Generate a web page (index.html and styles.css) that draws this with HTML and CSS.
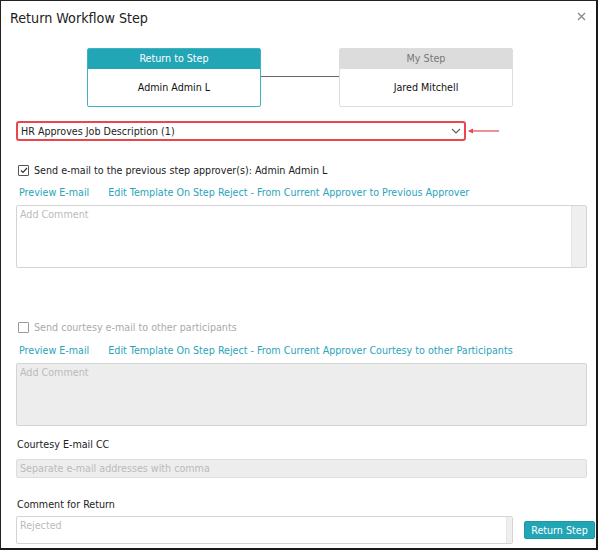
FILE: index.html
```html
<!DOCTYPE html>
<html lang="en">
  <head>
    <meta charset="UTF-8" />
    <meta name="viewport" content="width=device-width, initial-scale=1.0" />
    <title>Return Workflow Step</title>
    <link rel="stylesheet" href="styles.css">
  </head>
  <body>
    <div class="modal">
      <div class="modal-header">
        <h1>Return Workflow Step</h1>
        <svg class="close" width="9" height="9" viewBox="0 0 9 9">
          <path d="M1 1 L8 8 M8 1 L1 8" stroke="#888" stroke-width="1.3" />
        </svg>
      </div>

      <div class="steps">
        <div class="step active">
          <div class="step-title">Return to Step</div>
          <div class="step-name">Admin Admin L</div>
        </div>
        <div class="step-line"></div>
        <div class="step">
          <div class="step-title">My Step</div>
          <div class="step-name">Jared Mitchell</div>
        </div>
      </div>

      <div class="form">
        <div class="select-row">
          <div class="select">
            <span>HR Approves Job Description (1)</span>
            <svg width="10" height="6" viewBox="0 0 10 6">
              <path d="M1 1 L5 5 L9 1" fill="none" stroke="#666" stroke-width="1.2" />
            </svg>
          </div>
          <svg class="pointer" width="34" height="8" viewBox="0 0 34 8">
            <path d="M2 4 H32" stroke="#e8474c" stroke-width="1.2" />
            <path d="M1 4 L6 1.5 L6 6.5 Z" fill="#e8474c" />
          </svg>
        </div>

        <label class="check">
          <span class="box checked">
            <svg width="8" height="7" viewBox="0 0 8 7">
              <path d="M1 3.5 L3 5.5 L7 1" fill="none" stroke="#333" stroke-width="1.2" />
            </svg>
          </span>
          Send e-mail to the previous step approver(s): Admin Admin L
        </label>

        <div class="links">
          <a href="#">Preview E-mail</a>
          <a href="#">Edit Template On Step Reject - From Current Approver to Previous Approver</a>
        </div>

        <div class="field tall">
          <textarea placeholder="Add Comment"></textarea>
          <span class="scroll"></span>
        </div>

        <label class="check disabled">
          <span class="box"></span>
          Send courtesy e-mail to other participants
        </label>

        <div class="links">
          <a href="#">Preview E-mail</a>
          <a href="#">Edit Template On Step Reject - From Current Approver Courtesy to other Participants</a>
        </div>

        <div class="field tall disabled">
          <textarea placeholder="Add Comment" disabled></textarea>
        </div>

        <div class="label">Courtesy E-mail CC</div>
        <input class="cc" type="text" placeholder="Separate e-mail addresses with comma" disabled />

        <div class="label">Comment for Return</div>
        <div class="return-row">
          <div class="field short">
            <textarea placeholder="Rejected"></textarea>
            <span class="scroll"></span>
          </div>
          <button type="button">Return Step</button>
        </div>
      </div>
    </div>
  </body>
</html>
```

FILE: styles.css
```css
body {
  margin: 0;
  background: #fff;
  font-family: "DejaVu Sans Condensed", "DejaVu Sans", sans-serif;
  font-size: 10.65px;
  color: #222;
}

.modal {
  width: 598px;
  height: 550px;
  box-sizing: border-box;
  border: 1px solid #222;
  border-right: 2px solid #1a1a1a;
  border-bottom: 2px solid #1a1a1a;
  background: #fff;
}

.modal-header {
  display: flex;
  justify-content: space-between;
  align-items: flex-start;
  padding: 9px 10px 0 9px;
  height: 38px;
}

.modal-header h1 {
  margin: 0;
  font-size: 14.2px;
  font-weight: normal;
  color: #222;
}

.close {
  margin-top: 2px;
}

.steps {
  display: flex;
  justify-content: center;
  align-items: center;
  padding-left: 3px;
}

.step {
  width: 174px;
  height: 59px;
  box-sizing: border-box;
  border: 1px solid #ddd;
  border-radius: 2px;
  text-align: center;
}

.step-title {
  height: 20px;
  line-height: 20px;
  background: #dcdcdc;
  color: #777;
}

.step-name {
  line-height: 38px;
  color: #111;
}

.step.active {
  border-color: #3fb3c2;
}

.step.active .step-title {
  background: #22a6b6;
  color: #fff;
}

.step-line {
  width: 78px;
  border-top: 1px solid #666;
  margin-top: -3px;
}

.form {
  padding: 14px 1px 0 15px;
}

.select-row {
  display: flex;
  align-items: center;
}

.select {
  width: 450px;
  height: 20px;
  box-sizing: border-box;
  border: 2px solid #e8474c;
  border-radius: 3px;
  display: flex;
  justify-content: space-between;
  align-items: center;
  padding: 0 3px 0 3px;
}

.pointer {
  margin-left: 1px;
}

.check {
  display: flex;
  align-items: center;
  gap: 5px;
  margin: 23px 0 0 2px;
  height: 12px;
}

.box {
  width: 9px;
  height: 9px;
  border: 1px solid #555;
  border-radius: 1px;
  display: flex;
  align-items: center;
  justify-content: center;
}

.check.disabled {
  color: #aaa;
  margin-top: 53px;
}

.check.disabled .box {
  border-color: #999;
}

.links {
  display: flex;
  gap: 19px;
  margin: 10px 0 0 3px;
  height: 13px;
  line-height: 13px;
}

.check.disabled + .links {
  margin-top: 11px;
}

.links a {
  color: #2aa4bc;
  text-decoration: none;
}

.field {
  display: flex;
  border: 1px solid #d4d4d4;
  border-radius: 2px;
  margin-top: 6px;
  background: #fff;
}

.field textarea {
  flex: 1;
  border: none;
  resize: none;
  outline: none;
  padding: 2px 3px;
  font-family: inherit;
  font-size: inherit;
  background: transparent;
}

.field textarea::placeholder,
.cc::placeholder {
  color: #bbb;
}

.field .scroll {
  width: 14px;
  background: #efefef;
  border-left: 1px solid #e6e6e6;
}

.field.tall {
  height: 63px;
  width: 571px;
  box-sizing: border-box;
}

.field.disabled {
  background: #ededed;
}

.label {
  margin: 12px 0 0 1px;
  height: 13px;
  line-height: 13px;
  color: #222;
}

.cc {
  display: block;
  width: 571px;
  height: 19px;
  box-sizing: border-box;
  margin-top: 8px;
  border: 1px solid #ddd;
  border-radius: 2px;
  background: #ededed;
  padding: 0 3px;
  font-family: inherit;
  font-size: inherit;
}

.cc + .label {
  margin-top: 20px;
}

.return-row {
  display: flex;
  align-items: center;
  gap: 11px;
  margin-top: 5px;
}

.field.short {
  margin-top: 0;
  width: 497px;
  height: 28px;
  box-sizing: border-box;
  flex-shrink: 0;
}

.field.short .scroll {
  width: 5px;
}

button {
  width: 71px;
  height: 18px;
  padding: 0;
  flex-shrink: 0;
  white-space: nowrap;
  border: 1px solid #1d97a6;
  border-radius: 2px;
  background: #22a6b6;
  color: #fff;
  font-family: inherit;
  font-size: inherit;
}
```
